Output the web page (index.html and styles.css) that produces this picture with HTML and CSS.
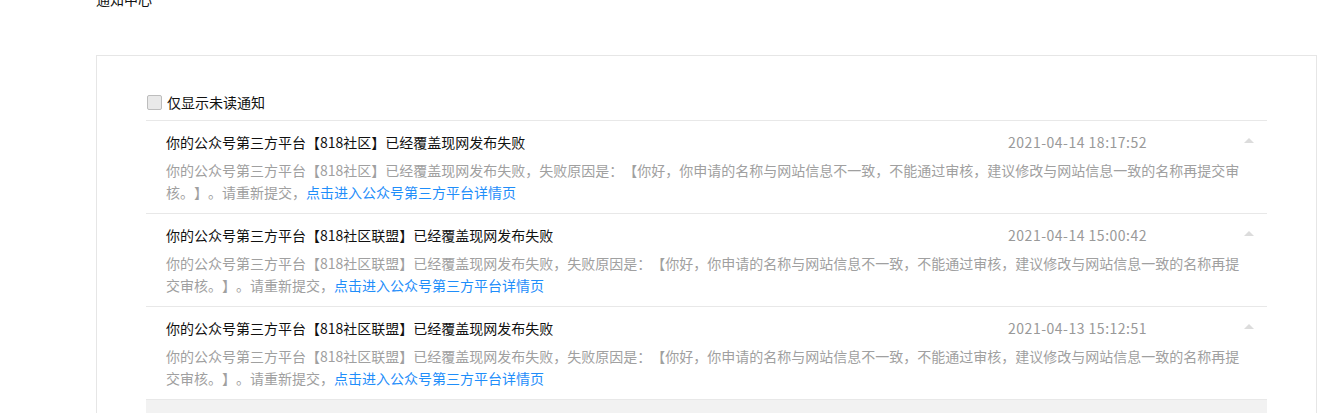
FILE: index.html
```html
<!DOCTYPE html>
<html lang="zh-CN">
<head>
    <meta charset="UTF-8">
    <meta name="viewport" content="width=device-width, initial-scale=1.0">
    <title>通知中心</title>
    <link rel="stylesheet" href="styles.css">
</head>
<body>
    <div class="page">
        <h2 class="page-title">通知中心</h2>
        <div class="panel">
            <label class="filter">
                <span class="checkbox"></span>
                仅显示未读通知
            </label>
            <div class="notice-list">
                <div class="notice-item">
                    <div class="notice-head">
                        <span class="notice-title">你的公众号第三方平台【818社区】已经覆盖现网发布失败</span>
                        <span class="notice-date">2021-04-14 18:17:52</span>
                        <span class="arrow"></span>
                    </div>
                    <div class="notice-body">你的公众号第三方平台【818社区】已经覆盖现网发布失败，失败原因是：【你好，你申请的名称与网站信息不一致，不能通过审核，建议修改与网站信息一致的名称再提交审核。】。请重新提交，<a href="#">点击进入公众号第三方平台详情页</a></div>
                </div>
                <div class="notice-item">
                    <div class="notice-head">
                        <span class="notice-title">你的公众号第三方平台【818社区联盟】已经覆盖现网发布失败</span>
                        <span class="notice-date">2021-04-14 15:00:42</span>
                        <span class="arrow"></span>
                    </div>
                    <div class="notice-body">你的公众号第三方平台【818社区联盟】已经覆盖现网发布失败，失败原因是：【你好，你申请的名称与网站信息不一致，不能通过审核，建议修改与网站信息一致的名称再提交审核。】。请重新提交，<a href="#">点击进入公众号第三方平台详情页</a></div>
                </div>
                <div class="notice-item">
                    <div class="notice-head">
                        <span class="notice-title">你的公众号第三方平台【818社区联盟】已经覆盖现网发布失败</span>
                        <span class="notice-date">2021-04-13 15:12:51</span>
                        <span class="arrow"></span>
                    </div>
                    <div class="notice-body">你的公众号第三方平台【818社区联盟】已经覆盖现网发布失败，失败原因是：【你好，你申请的名称与网站信息不一致，不能通过审核，建议修改与网站信息一致的名称再提交审核。】。请重新提交，<a href="#">点击进入公众号第三方平台详情页</a></div>
                </div>
                <div class="load-more"></div>
            </div>
        </div>
    </div>
</body>
</html>
```

FILE: styles.css
```css
* {
    box-sizing: border-box;
    margin: 0;
    padding: 0;
}
body {
    background: #fff;
    color: #333;
    font-family: "Microsoft YaHei", "Noto Sans CJK SC", sans-serif;
    font-size: 14px;
    text-spacing-trim: space-all;
}
.page {
    margin: -12px 20px 0 96px;
}
.page-title {
    font-size: 14px;
    font-weight: normal;
    line-height: 22px;
    color: #111;
    margin-bottom: 45px;
}
.panel {
    border: 1px solid #e6e6e6;
    border-bottom: none;
    padding: 35px 49px 0 49px;
    height: 400px;
}
.filter {
    display: flex;
    align-items: center;
    line-height: 22px;
    padding: 0 0 7px 1px;
    color: #111;
}
.checkbox {
    width: 15px;
    height: 15px;
    border: 1px solid #bdbdbd;
    border-radius: 2px;
    background: #e9e9e9;
    margin-right: 5px;
}
.notice-item {
    border-top: 1px solid #e8e8e8;
    padding: 10px 20px 10px 20px;
}
.notice-head {
    display: flex;
    align-items: center;
    line-height: 22px;
    margin-bottom: 6px;
    margin-right: -7px;
}
.notice-title {
    flex: 1;
    color: #111;
}
.notice-date {
    color: #999;
    letter-spacing: 0.5px;
    margin-right: 97px;
}
.arrow {
    width: 0;
    height: 0;
    border-left: 5px solid transparent;
    border-right: 5px solid transparent;
    border-bottom: 5px solid #dcdcdc;
    margin-top: -4px;
}
.notice-body {
    color: #a0a0a0;
    line-height: 22px;
}
.notice-body a {
    color: #1f8efa;
    text-decoration: none;
}
.load-more {
    border-top: 1px solid #e8e8e8;
    background: #f2f2f2;
    height: 40px;
}
```
